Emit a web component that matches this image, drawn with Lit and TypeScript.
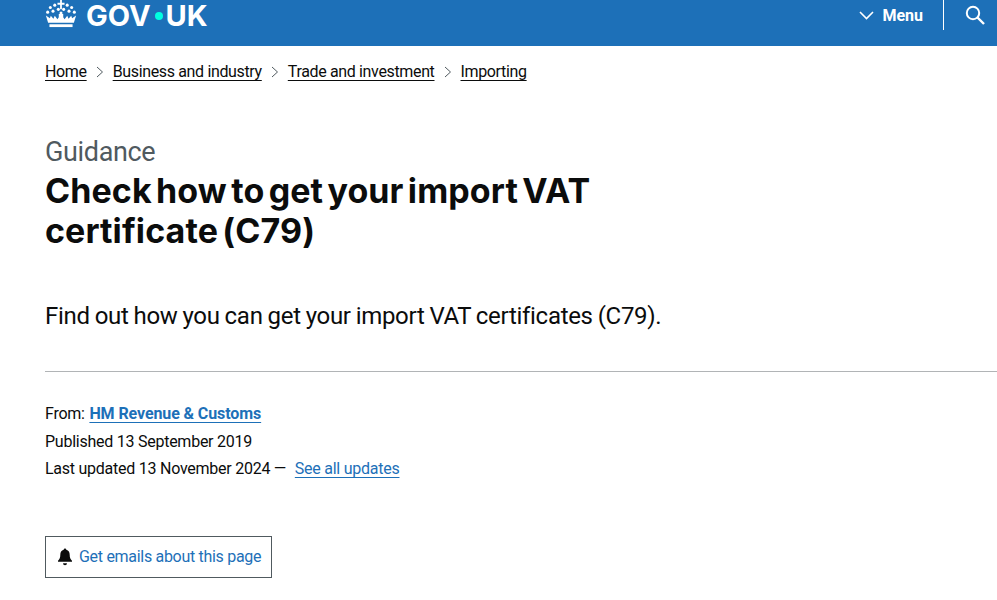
import { LitElement, html, css, svg } from 'lit';
import { customElement } from 'lit/decorators.js';

const crumbs = ['Home', 'Business and industry', 'Trade and investment', 'Importing'];

const crownDots = [
  [6, 8], [11, 5.5], [25, 5.5], [30, 8], [3, 13], [9, 12], [15, 10], [21, 10], [27, 12], [33, 13], [18, 14],
];

@customElement('app-root')
export class AppRoot extends LitElement {
  static styles = css`
    :host {
      display: block;
      height: 600px;
      overflow: hidden;
      background: #fff;
      color: #0b0c0c;
      font-family: Roboto, 'Noto Sans', sans-serif;
    }

    a {
      color: inherit;
    }

    .header {
      display: flex;
      justify-content: space-between;
      height: 46px;
      padding: 0 0 0 45px;
      background: #1d70b8;
      color: #fff;
    }

    .logo {
      display: flex;
      align-items: flex-start;
      gap: 10px;
      height: 30px;
    }

    .logo__text {
      margin-left: -1px;
      font-family: Inter, sans-serif;
      font-size: 29px;
      font-weight: 700;
      line-height: 31px;
      white-space: nowrap;
    }

    .logo__dot {
      display: inline-block;
      width: 8px;
      height: 8px;
      margin: 0 3px 0 4px;
      border-radius: 50%;
      background: #00ffe0;
      vertical-align: 6px;
    }

    .nav {
      display: flex;
      align-items: flex-start;
    }

    .menu {
      display: flex;
      align-items: center;
      gap: 8px;
      height: 30px;
      padding-right: 20px;
      border-right: 1px solid #fff;
      font-size: 16px;
      font-weight: 700;
    }

    .search {
      width: 53px;
      padding: 5px 0 0 21px;
      box-sizing: border-box;
    }

    .crumbs {
      display: flex;
      align-items: center;
      padding: 17px 0 0 45px;
      font-size: 16px;
      line-height: 18px;
      letter-spacing: -0.35px;
    }

    .crumbs a {
      text-underline-offset: 3px;
    }

    .crumbs svg {
      margin: 0 9px;
    }

    .title {
      padding: 56px 0 0 45px;
    }

    .title__kicker {
      font-size: 27px;
      line-height: 30px;
      letter-spacing: -0.35px;
      color: #505a5f;
    }

    h1 {
      width: 640px;
      margin: 0;
      padding-top: 4px;
      font-family: Inter, sans-serif;
      font-size: 34px;
      font-weight: 700;
      line-height: 40px;
      letter-spacing: 0.1px;
      word-spacing: -3.85px;
    }

    .lead {
      margin: 0;
      padding: 50px 0 0 45px;
      font-size: 24px;
      line-height: 30px;
      letter-spacing: -0.3px;
      word-spacing: -0.7px;
    }

    .meta {
      margin: 40px 0 0 45px;
      padding-top: 28px;
      border-top: 1px solid #b1b4b6;
      font-size: 16px;
      line-height: 27.5px;
      letter-spacing: -0.25px;
    }

    .meta a {
      color: #1d70b8;
      text-underline-offset: 3px;
    }

    .meta__org {
      margin-left: 1px;
      font-weight: 700;
      letter-spacing: -0.1px;
    }

    .meta__updates {
      margin-left: 5px;
    }

    .emails {
      display: inline-flex;
      align-items: center;
      gap: 5px;
      margin: 53px 0 0 45px;
      padding: 0 10px;
      height: 40px;
      border: 1px solid #505a5f;
      color: #1d70b8;
      font-size: 16px;
      letter-spacing: -0.3px;
    }
  `;

  render() {
    return html`
      <div class="header">
        <div class="logo">
          ${this.crown}
          <span class="logo__text">GOV<span class="logo__dot"></span>UK</span>
        </div>
        <div class="nav">
          <div class="menu">
            <svg width="15" height="10" viewBox="0 0 15 10">
              <path d="M1 2l6.500 6.500L14 2" fill="none" stroke="#fff" stroke-width="1.600" />
            </svg>
            Menu
          </div>
          <div class="search">
            <svg width="20" height="20" viewBox="0 0 20 20">
              <circle cx="8" cy="8" r="6.200" fill="none" stroke="#fff" stroke-width="2" />
              <path d="M12.500 12.500L19 19" stroke="#fff" stroke-width="2.400" />
            </svg>
          </div>
        </div>
      </div>

      <div class="crumbs">
        ${crumbs.map(
          (crumb, i) => html`${i > 0
              ? html`<svg width="8" height="12" viewBox="0 0 8 12">
                  <path d="M1 1l5.500 5L1 11" fill="none" stroke="#505a5f" stroke-width="1" />
                </svg>`
              : ''}<a href="#">${crumb}</a>`
        )}
      </div>

      <div class="title">
        <div class="title__kicker">Guidance</div>
        <h1>Check how to get your import VAT certificate (C79)</h1>
      </div>

      <p class="lead">Find out how you can get your import VAT certificates (C79).</p>

      <div class="meta">
        <div>From: <a class="meta__org" href="#">HM Revenue &amp; Customs</a></div>
        <div>Published 13 September 2019</div>
        <div>Last updated 13 November 2024 — <a class="meta__updates" href="#">See all updates</a></div>
      </div>

      <div class="emails">
        <svg width="18" height="18" viewBox="0 0 18 18">
          <path
            d="M9 0.500c.8 0 1.300.6 1.300 1.300 2.400.6 3.400 2.600 3.400 5 0 3 .7 4.400 2.300 5.900v1H2v-1c1.600-1.500 2.300-2.900 2.300-5.900 0-2.400 1-4.400 3.400-5C7.700 1.100 8.200.5 9 .5z"
            fill="#0b0c0c"
          />
          <path d="M7 15.200h4a2 2 0 0 1-4 0z" fill="#0b0c0c" />
        </svg>
        Get emails about this page
      </div>
    `;
  }

  private get crown() {
    return html`<svg width="32" height="28" viewBox="0 0 36 30" preserveAspectRatio="none">
      <g fill="#fff">
        ${crownDots.map(([cx, cy]) => svg`<circle cx=${cx} cy=${cy} r="1.700" />`)}
      </g>
      <path d="M17 0h2v3h3v2h-3v5h-2V5h-3V3h3z" fill="#fff" />
      <path
        d="M1 16.500l4.500 3 1-2.500 3 3 1.500-3 3 3.500 1.500-2V15h5v3.500l1.500 2 3-3.500 1.500 3 3-3 1 2.500 4.500-3-2.500 8H3.500z"
        fill="#fff"
      />
      <rect x="5" y="26" width="26" height="3" fill="#fff" />
    </svg>`;
  }
}
